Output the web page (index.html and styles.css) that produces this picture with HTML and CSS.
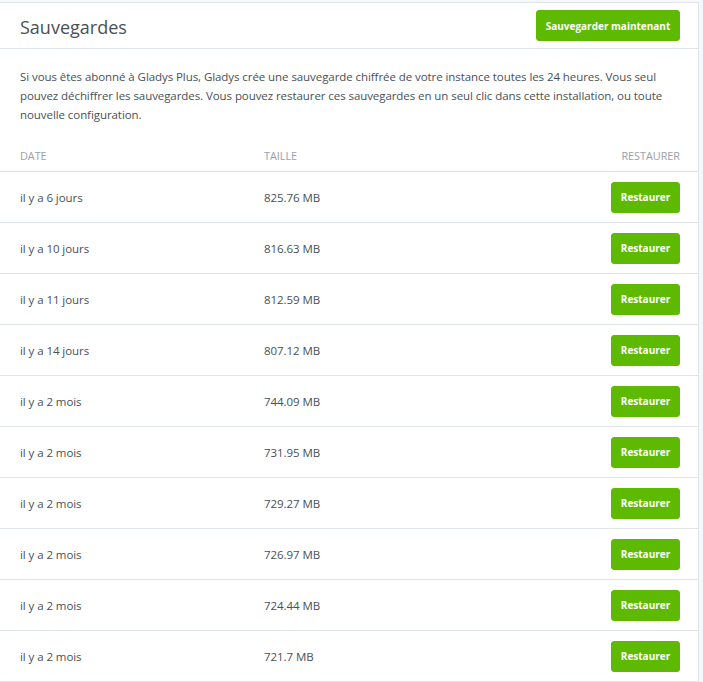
FILE: index.html
```html
<!DOCTYPE html>
<html lang="fr">
<head>
<meta charset="utf-8">
<title>Sauvegardes</title>
<link rel="stylesheet" href="styles.css">
</head>
<body>
<div class="card">
  <div class="card-header">
    <h3 class="card-title">Sauvegardes</h3>
    <button class="btn btn-success">Sauvegarder maintenant</button>
  </div>
  <div class="card-body">
    <p class="intro">Si vous êtes abonné à Gladys Plus, Gladys crée une sauvegarde chiffrée de votre instance toutes les 24 heures. Vous seul pouvez déchiffrer les sauvegardes. Vous pouvez restaurer ces sauvegardes en un seul clic dans cette installation, ou toute nouvelle configuration.</p>
  </div>
  <div class="backups">
    <div class="row head">
      <div class="cell">Date</div>
      <div class="cell">Taille</div>
      <div class="cell right">Restaurer</div>
    </div>
    <div class="row"><div class="cell">il y a 6 jours</div><div class="cell">825.76 MB</div><div class="cell right"><button class="btn btn-success btn-sm">Restaurer</button></div></div>
    <div class="row"><div class="cell">il y a 10 jours</div><div class="cell">816.63 MB</div><div class="cell right"><button class="btn btn-success btn-sm">Restaurer</button></div></div>
    <div class="row"><div class="cell">il y a 11 jours</div><div class="cell">812.59 MB</div><div class="cell right"><button class="btn btn-success btn-sm">Restaurer</button></div></div>
    <div class="row"><div class="cell">il y a 14 jours</div><div class="cell">807.12 MB</div><div class="cell right"><button class="btn btn-success btn-sm">Restaurer</button></div></div>
    <div class="row"><div class="cell">il y a 2 mois</div><div class="cell">744.09 MB</div><div class="cell right"><button class="btn btn-success btn-sm">Restaurer</button></div></div>
    <div class="row"><div class="cell">il y a 2 mois</div><div class="cell">731.95 MB</div><div class="cell right"><button class="btn btn-success btn-sm">Restaurer</button></div></div>
    <div class="row"><div class="cell">il y a 2 mois</div><div class="cell">729.27 MB</div><div class="cell right"><button class="btn btn-success btn-sm">Restaurer</button></div></div>
    <div class="row"><div class="cell">il y a 2 mois</div><div class="cell">726.97 MB</div><div class="cell right"><button class="btn btn-success btn-sm">Restaurer</button></div></div>
    <div class="row"><div class="cell">il y a 2 mois</div><div class="cell">724.44 MB</div><div class="cell right"><button class="btn btn-success btn-sm">Restaurer</button></div></div>
    <div class="row"><div class="cell">il y a 2 mois</div><div class="cell">721.7 MB</div><div class="cell right"><button class="btn btn-success btn-sm">Restaurer</button></div></div>
  </div>
</div>
</body>
</html>
```
FILE: styles.css
```css
html, body {
  margin: 0;
  padding: 0;
  background: #f5f7fb;
}

body {
  padding-top: 2px;
  font-family: "Open Sans", "Noto Sans", sans-serif;
  color: #495057;
  font-size: 11.5px;
  letter-spacing: -0.07px;
}

.card {
  margin-left: -1px;
  width: 698px;
  background: #fff;
  border: 1px solid #e0e5ec;
  border-bottom: 0;
}

.card-header {
  display: flex;
  align-items: center;
  justify-content: space-between;
  height: 45px;
  padding: 0 18px 0 20px;
  border-bottom: 1px solid #e0e5ec;
}

.card-title {
  margin: 0;
  padding-top: 3px;
  font-size: 18px;
  font-weight: 400;
  letter-spacing: 0;
  color: #495057;
}

.btn {
  font-family: inherit;
  border: 1px solid #5eba00;
  background: #5eba00;
  color: #fff;
  border-radius: 3px;
  font-weight: 700;
  letter-spacing: 0;
  cursor: pointer;
}

.card-header .btn {
  width: 144px;
  height: 31px;
  font-size: 10px;
  padding: 0;
}

.btn-sm {
  width: 69px;
  height: 31px;
  font-size: 10px;
  padding: 0;
}

.card-body {
  padding: 18px 18px 0 20px;
}

.intro {
  margin: 0;
  line-height: 19px;
}

.backups {
  margin-top: 15px;
}

.row {
  display: grid;
  grid-template-columns: 244px 1fr auto;
  align-items: center;
  height: 50px;
  padding: 0 18px 0 20px;
  border-bottom: 1px solid #e0e5ec;
}

.row.head {
  height: 32px;
  border-bottom-color: #dee2e6;
  text-transform: uppercase;
  color: #9aa0ac;
  font-size: 10.8px;
  letter-spacing: 0;
}

.cell.right {
  text-align: right;
}

.row .btn {
  display: block;
  margin-left: auto;
}
```
